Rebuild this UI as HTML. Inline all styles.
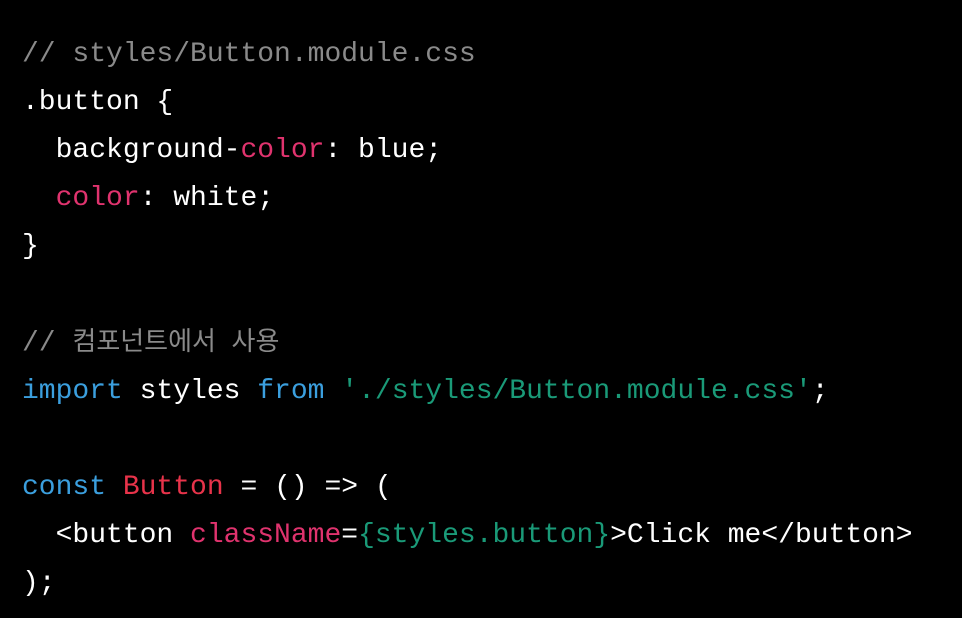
<!DOCTYPE html>
<html><head><meta charset="utf-8"><style>
html,body{margin:0;background:#000;width:962px;height:618px;overflow:hidden}
pre{margin:0;position:absolute;left:22px;top:31px;font-family:"Liberation Mono","Noto Sans CJK KR",monospace;font-size:28px;line-height:48px;color:#fff}
.c{color:#8a8a8a}.k{color:#3b9fde}.r{color:#e8334a}.p{color:#e0336e}.g{color:#1a9a78}
.ko{font-size:26px}
</style></head><body><pre><span class="c">// styles/Button.module.css</span>
.button {
  background-<span class="p">color</span>: blue;
  <span class="p">color</span>: white;
}

<span class="c">// <span class="ko">컴포넌트에서 사용</span></span>
<span class="k">import</span> styles <span class="k">from</span> <span class="g">'./styles/Button.module.css'</span>;

<span class="k">const</span> <span class="r">Button</span> = () =&gt; (
  &lt;button <span class="p">className</span>=<span class="g">{styles.button}</span>&gt;Click me&lt;/button&gt;
);</pre></body></html>
